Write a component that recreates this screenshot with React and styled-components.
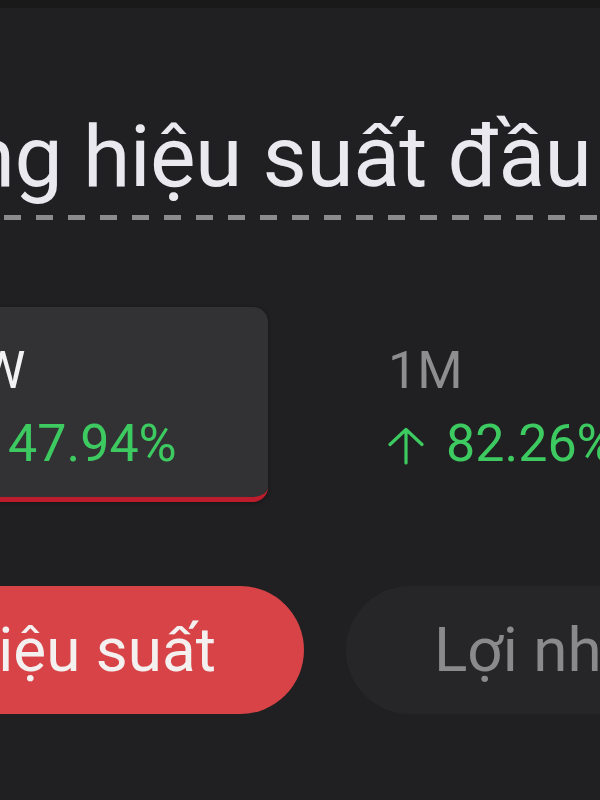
import React from "react";
import styled, { createGlobalStyle } from "styled-components";

const GlobalStyle = createGlobalStyle`
  html, body {
    margin: 0;
    padding: 0;
    background: #202022;
    overflow: hidden;
    font-family: Roboto, "Noto Sans", "Liberation Sans", sans-serif;
  }
`;

const Screen = styled.div`
  width: 600px;
  height: 800px;
  overflow: hidden;
  background: #202022;
  display: flex;
  flex-direction: column;
`;

const StatusStrip = styled.div`
  height: 8px;
  background: #19191a;
  flex: none;
`;

const Title = styled.h1`
  margin: 99px 0 0 -291px;
  font-size: 86px;
  line-height: 100px;
  letter-spacing: -0.6px;
  font-weight: 400;
  color: #e9e9ef;
  white-space: nowrap;
`;

const Dashes = styled.div`
  margin-top: 8px;
  height: 5px;
  background-image: linear-gradient(
    to right,
    #8b8b8d 0,
    #8b8b8d 17px,
    transparent 17px,
    transparent 32px
  );
  background-size: 32px 5px;
  background-position: 4px 0;
  background-repeat: repeat-x;
  border-radius: 2px;
`;

const CardRow = styled.div`
  display: flex;
  gap: 84px;
  margin: 87px 0 0 -86px;
`;

const Card = styled.div`
  flex: none;
  width: 354px;
  box-sizing: border-box;
  padding: 34px 36px 23px;
  border-radius: 15px;
  background: ${(p) => (p.$active ? "#323234" : "transparent")};
  border-bottom: 5px solid ${(p) => (p.$active ? "#bd1c2c" : "transparent")};
  box-shadow: ${(p) => (p.$active ? "0 1px 4px rgba(0,0,0,0.35)" : "none")};
`;

const Label = styled.div`
  font-size: 52px;
  line-height: 60px;
  color: ${(p) => (p.$active ? "#f2f2f4" : "#8e8e90")};
  white-space: nowrap;
`;

const Value = styled.div`
  margin-top: 13px;
  display: flex;
  align-items: center;
  gap: 22px;
  font-size: 52px;
  line-height: 60px;
  color: #3dcb61;
  white-space: nowrap;
`;

const Arrow = styled.svg`
  flex: none;
  width: 36px;
  height: 38px;
  margin-top: 4px;
`;

const TabRow = styled.div`
  display: flex;
  gap: 42px;
  margin: 84px 0 0 -134px;
`;

const Tab = styled.div`
  flex: none;
  height: 128px;
  border-radius: 64px;
  padding: 0 88px;
  font-size: 62px;
  line-height: 128px;
  white-space: nowrap;
  background: ${(p) => (p.$active ? "#d74346" : "#262628")};
  color: ${(p) => (p.$active ? "#f4f0f0" : "#8a8a8c")};
`;

const UpArrow = () => (
  <Arrow viewBox="0 0 36 38" fill="none">
    <path
      d="M18 2.5 V36 M2 17.5 L18 2.5 L34 17.5"
      stroke="currentColor"
      strokeWidth="3.2"
      strokeLinecap="round"
      strokeLinejoin="round"
    />
  </Arrow>
);

const periods = [
  { label: "1W", value: "47.94%", active: true },
  { label: "1M", value: "82.26%", active: false },
];

export default function App() {
  return (
    <Screen>
      <GlobalStyle />
      <StatusStrip />
      <Title>Xếp hạng hiệu suất đầu tư</Title>
      <Dashes />
      <CardRow>
        {periods.map((p) => (
          <Card key={p.label} $active={p.active}>
            <Label $active={p.active}>{p.label}</Label>
            <Value>
              <UpArrow />
              {p.value}
            </Value>
          </Card>
        ))}
      </CardRow>
      <TabRow>
        <Tab $active>Hiệu suất</Tab>
        <Tab>Lợi nhuận</Tab>
      </TabRow>
    </Screen>
  );
}
